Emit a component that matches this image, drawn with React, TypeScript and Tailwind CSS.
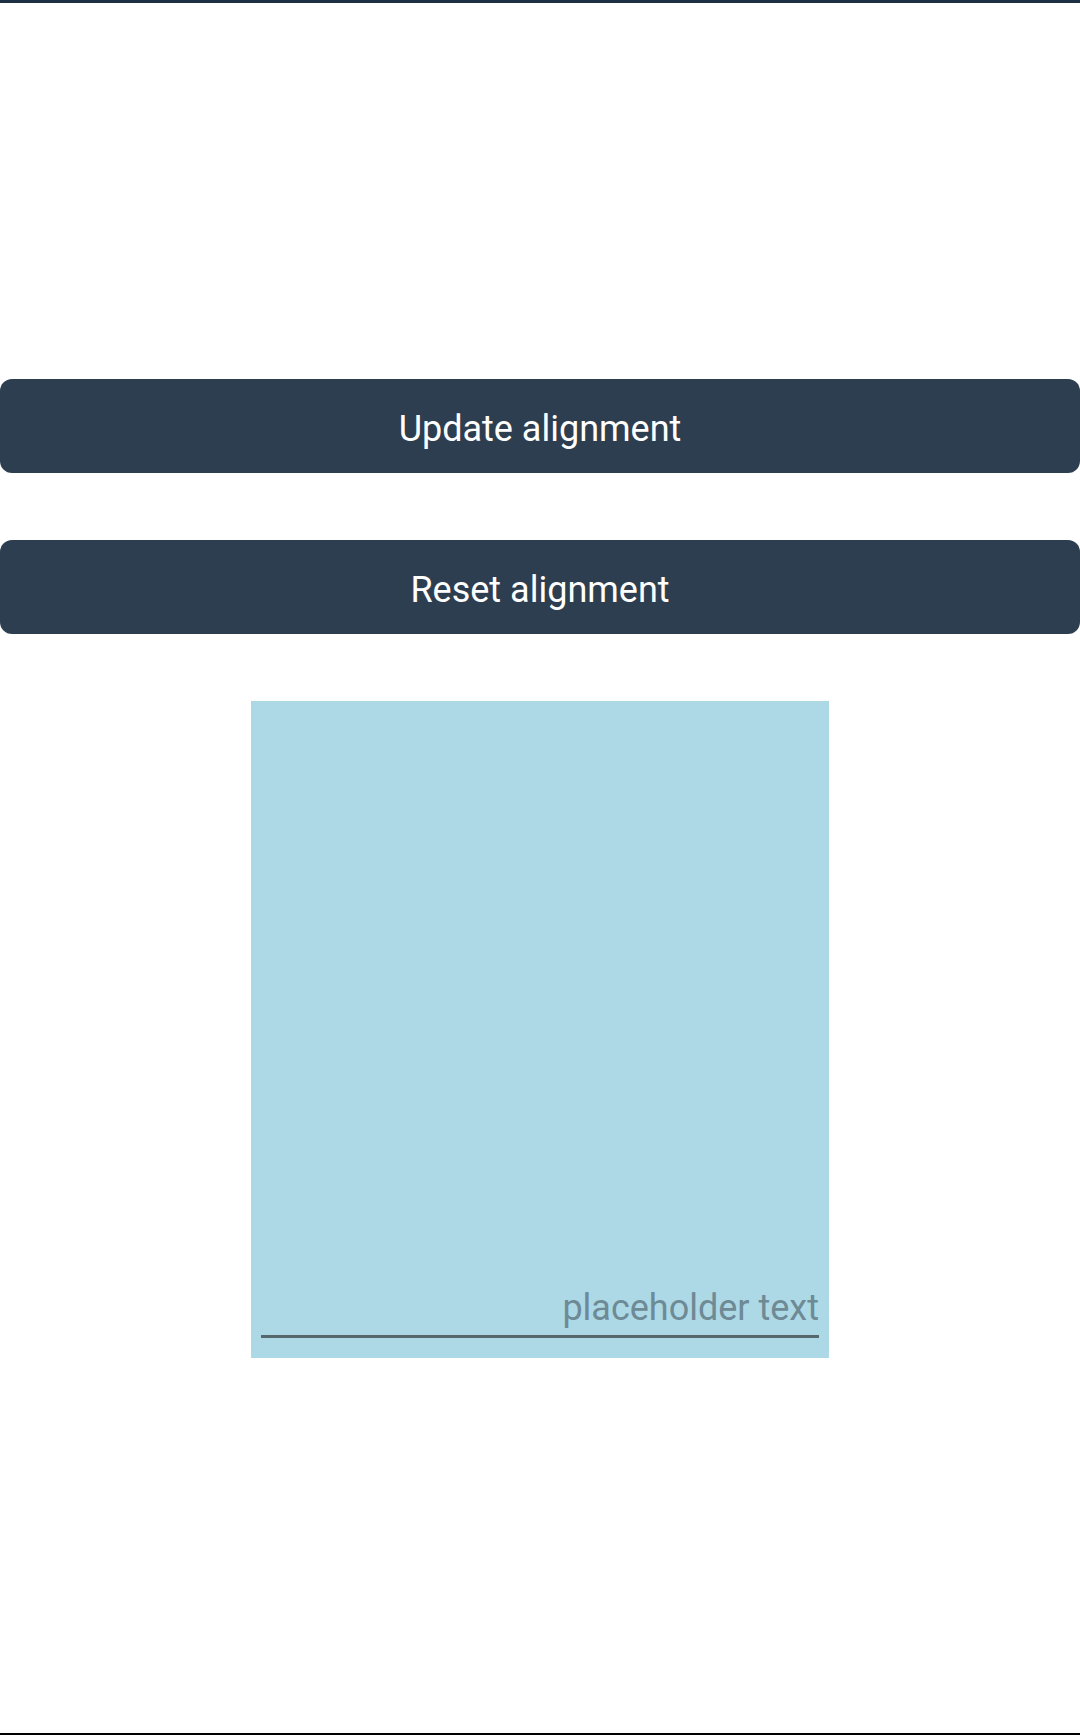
import React from 'react';

function ActionButton({ label }: { label: string }) {
  return (
    <button
      type="button"
      className="w-full h-[94px] pt-[6px] rounded-[12px] bg-[#2d3e50] text-white text-[36px] leading-none flex items-center justify-center"
    >
      {label}
    </button>
  );
}

export default function App() {
  return (
    <div className="min-h-[1735px] flex flex-col bg-white font-['Roboto',_'Noto_Sans',_sans-serif]">
      <div className="h-[3px] bg-[#1c2f45]" />

      <div className="pt-[376px] flex flex-col gap-[67px]">
        <ActionButton label="Update alignment" />
        <ActionButton label="Reset alignment" />
      </div>

      {/* text field container */}
      <div className="mt-[67px] flex justify-center">
        <div className="w-[578px] h-[657px] bg-[#add8e6] flex flex-col justify-end pl-[10px] pr-[10px] pb-[20px]">
          <input
            type="text"
            placeholder="placeholder text"
            className="w-full h-[50px] pb-[8px] bg-transparent text-right text-[36px] text-[#2d3e50] placeholder:text-[#6e8a95] border-b-[3px] border-[#56676e] outline-none"
          />
        </div>
      </div>

      <div className="mt-auto h-[2px] bg-black" />
    </div>
  );
}
